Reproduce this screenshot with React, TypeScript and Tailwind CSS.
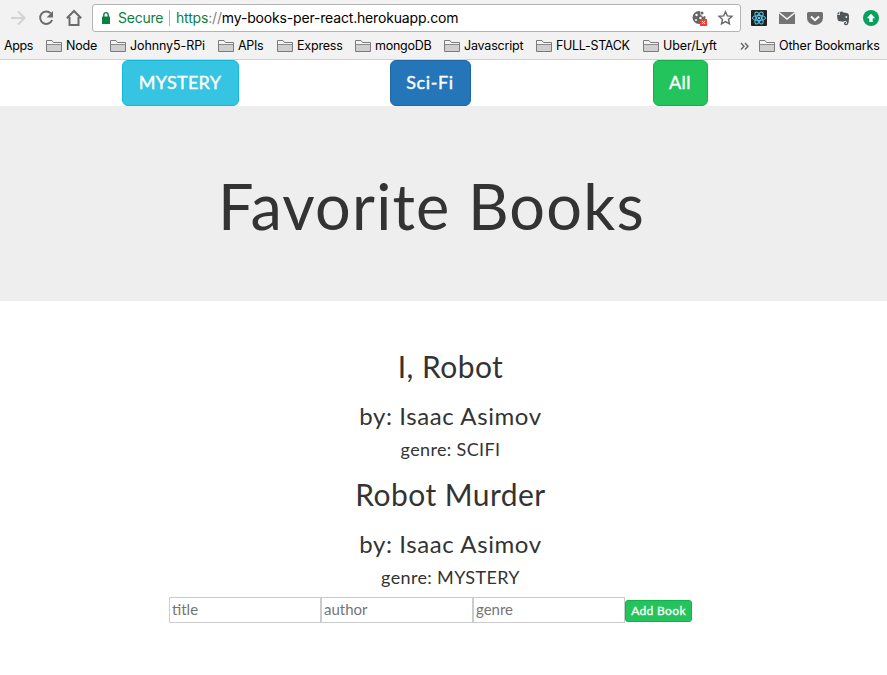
const chrome = "font-['Inter','Liberation_Sans',sans-serif]";
const page = "font-['Lato','Open_Sans',sans-serif]";

function Folder() {
  return (
    <svg width="16" height="14" viewBox="0 0 16 14" className="shrink-0">
      <path d="M.5 12.500v-11h5.500l1.500 2h8v9z" fill="#f4f4f4" stroke="#7b7b7b" />
      <path d="M1 5.500h14v6.500h-14z" fill="#cfcfcf" />
      <path d="M1 5.500h14" stroke="#8a8a8a" />
    </svg>
  );
}

const bookmarks = [
  { label: 'Node', cell: 'w-[64px]', text: 'tracking-[-0.2px]' },
  { label: 'Johnny5-RPi', cell: 'w-[108px]', text: 'tracking-[-0.1px]' },
  { label: 'APIs', cell: 'w-[59px]', text: 'tracking-[-0.3px]' },
  { label: 'Express', cell: 'w-[78px]', text: 'tracking-[-0.2px]' },
  { label: 'mongoDB', cell: 'w-[89px]', text: 'tracking-[-0.25px]' },
  { label: 'Javascript', cell: 'w-[92px]', text: 'tracking-[-0.2px]' },
  { label: 'FULL-STACK', cell: 'w-[107px]', text: 'tracking-[-0.3px]' },
  { label: 'Uber/Lyft', cell: 'w-[97px]', text: 'tracking-[-0.1px]' },
];

function ReactIcon() {
  return (
    <svg width="16" height="16" viewBox="0 0 16 16">
      <rect width="16" height="16" rx="1" fill="#222" />
      <g fill="none" stroke="#53c9ee" strokeWidth="1">
        <ellipse cx="8" cy="8" rx="6.6" ry="2.5" />
        <ellipse cx="8" cy="8" rx="6.6" ry="2.5" transform="rotate(60 8 8)" />
        <ellipse cx="8" cy="8" rx="6.6" ry="2.5" transform="rotate(120 8 8)" />
      </g>
      <circle cx="8" cy="8" r="1.3" fill="#53c9ee" />
    </svg>
  );
}

function Toolbar() {
  return (
    <div className="flex h-9 items-center">
      <svg width="92" height="36" viewBox="0 0 92 36" className="shrink-0" fill="none">
        <path d="M11 18h13M18 11.5l6.5 6.5-6.5 6.5" stroke="#d2d2d2" strokeWidth="2" />
        <path d="M50.8 13.4a6.2 6.2 0 1 0 1.3 6.6" stroke="#6b6b6b" strokeWidth="2" />
        <path d="M53 11v6.4h-6.4z" fill="#6b6b6b" />
        <path d="M66.800 18.200L74 11l7.200 7.200M69.500 17v8h9v-8" stroke="#6b6b6b" strokeWidth="2" />
      </svg>
      <div className="flex h-[28px] w-[649px] shrink-0 items-center rounded-[3px] border border-[#b4b4b4] bg-white text-[14px]">
        <svg width="25" height="26" viewBox="0 0 25 26" className="shrink-0">
          <rect x="9" y="11.500" width="8" height="7.500" rx=".5" fill="#0b8043" />
          <path d="M10.800 12v-2.200a2.200 2.200 0 0 1 4.400 0V12" fill="none" stroke="#0b8043" strokeWidth="1.400" />
        </svg>
        <span className="w-[51px] shrink-0 pb-px tracking-[-0.25px] text-[#0b8043]">Secure</span>
        <span className="h-4 w-px bg-[#b4b4b4]" />
        <span className="ml-[6px] w-[515px] shrink-0 pb-px tracking-[-0.17px] whitespace-nowrap text-black">
          <span className="text-[#0b8043]">https</span><span className="text-[#808080]">://</span>my-books-per-react.herokuapp.com
        </span>
        <svg width="48" height="26" viewBox="0 0 48 26" className="shrink-0">
          <circle cx="8" cy="12.500" r="6.500" fill="#666" />
          <circle cx="5.500" cy="10" r="1.200" fill="#fff" />
          <circle cx="5" cy="15" r="1" fill="#fff" />
          <circle cx="9.500" cy="13" r="1.200" fill="#fff" />
          <path d="M9.500 5l6 5-3.500 2-3-3z" fill="#fff" />
          <circle cx="11" cy="8" r="1.500" fill="#666" />
          <rect x="9" y="14" width="7" height="7" fill="#ea4335" />
          <path d="M11 16l3 3m0-3l-3 3" stroke="#fff" strokeWidth="1" />
          <path d="M34.500 6.700l1.850 4.200 4.600.45-3.450 3.050 1 4.500-4-2.350-4 2.350 1-4.500-3.450-3.050 4.600-.45z" fill="none" stroke="#666" strokeWidth="1.400" />
        </svg>
      </div>
      <div className="ml-[10px] flex items-center gap-3">
        <ReactIcon />
        <svg width="16" height="16" viewBox="0 0 16 16">
          <rect y="2" width="16" height="12" fill="#747474" />
          <path d="M0 2.500l8 6.500 8-6.500" fill="none" stroke="#f2f2f2" strokeWidth="1.600" />
        </svg>
        <svg width="16" height="16" viewBox="0 0 16 16">
          <path d="M1.500 2h13q1.500 0 1.500 1.500V8a8 7 0 0 1-16 0V3.500Q0 2 1.500 2z" fill="#707070" />
          <path d="M4 6.500l4 3.700 4-3.700" fill="none" stroke="#fff" strokeWidth="2" />
        </svg>
        <svg width="16" height="16" viewBox="0 0 16 16">
          <path d="M2 5h3V2q2-1 3.500.5L12 3q1.800.4 2 2.500.3 4-.5 7.500-.6 2.500-3 2.200-2-.3-1.500-2.500.5-1 2-.7v1.200h-.8q0 1 1 .8 1-.5.8-2-1.500-1.500-2.500-1Q8.500 12 7 11.500L3.500 11Q2 9 2 5z" fill="#50565a" />
          <path d="M1.700 4.200L4.300 1.600v2.600z" fill="#50565a" />
          <circle cx="11.300" cy="7" r=".9" fill="#f2f2f2" />
        </svg>
        <svg width="16" height="16" viewBox="0 0 16 16">
          <circle cx="8" cy="8" r="8" fill="#08a05a" />
          <path d="M8 3.700l4.200 4.500H9.700V12H6.300V8.200H3.800z" fill="#fff" />
        </svg>
      </div>
    </div>
  );
}

function BookmarkBar() {
  return (
    <div className="flex h-[23px] items-center pb-[3px] text-[12.5px] whitespace-nowrap text-black">
      <span className="w-[42px] shrink-0 pl-1 tracking-[-0.4px]">Apps</span>
      <span className="w-1 shrink-0" />
      {bookmarks.map((b) => (
        <span key={b.label} className={`flex shrink-0 items-center gap-1 ${b.cell}`}>
          <Folder />
          <span className={b.text}>{b.label}</span>
        </span>
      ))}
      <svg width="19" height="16" viewBox="0 0 19 16" className="shrink-0">
        <path d="M1 5l3 3.200-3 3.200M5 5l3 3.200-3 3.200" fill="none" stroke="#666" strokeWidth="1.400" />
      </svg>
      <span className="flex items-center gap-1">
        <Folder />
        <span className="tracking-[-0.15px]">Other Bookmarks</span>
      </span>
    </div>
  );
}

function Book({ title, author, genre }: { title: string; author: string; genre: string }) {
  return (
    <li className="flex h-[128px] flex-col items-center whitespace-nowrap">
      <h2 className="text-[30px] leading-[33px] tracking-[0.45px]">{title}</h2>
      <h3 className="mt-[18px] text-[24px] leading-[30px] tracking-[0.6px]">by: {author}</h3>
      <p className="mt-[7px] text-[18px] leading-[22px] tracking-[0.35px]">genre: {genre}</p>
    </li>
  );
}

const field =
  'h-[26px] w-[152px] border border-[#ccc] px-[2px] pb-[2px] placeholder:text-[#757575]';

export default function App() {
  return (
    <div className="h-[675px] w-[887px] overflow-hidden bg-white text-[#333]">
      <header className={`h-[60px] border-b border-[#d0d0d0] bg-[#f2f2f2] ${chrome}`}>
        <Toolbar />
        <BookmarkBar />
      </header>
      <main className={page}>
        <nav className="ml-[55px] grid w-[750px] grid-cols-3 justify-items-center text-[18px] text-white [-webkit-text-stroke:0.4px_white]">
          <button className="h-[46px] w-[117px] rounded-[6px] border border-[#13b9dc] bg-[#35c4e2] pb-[2px] tracking-[0.3px]">MYSTERY</button>
          <button className="h-[46px] w-[81px] rounded-[6px] border border-[#2067a8] bg-[#2576b9] pb-[2px] tracking-[0.6px]">Sci-Fi</button>
          <button className="h-[46px] w-[55px] rounded-[6px] border border-[#12b14c] bg-[#24c45d] pb-[2px] tracking-[0.5px]">All</button>
        </nav>
        <section className="h-[195px] bg-[#eee] pt-[65px]">
          <h1 className="w-[863px] text-center text-[63px] leading-[70px] tracking-[1.2px]">Favorite Books</h1>
        </section>
        <ul className="ml-[95px] w-[711px] pt-[49px]">
          <Book title="I, Robot" author="Isaac Asimov" genre="SCIFI" />
          <Book title="Robot Murder" author="Isaac Asimov" genre="MYSTERY" />
        </ul>
        <form className="-mt-[9px] ml-[169px] flex items-center text-[15px]">
          <input placeholder="title" className={field} />
          <input placeholder="author" className={field} />
          <input placeholder="genre" className={field} />
          <button type="button" className="mt-[1px] h-[22px] w-[67px] rounded-[3px] border border-[#12b14c] bg-[#24c45d] text-[12px] leading-none tracking-[0.35px] whitespace-nowrap text-white [-webkit-text-stroke:0.3px_white]">Add Book</button>
        </form>
      </main>
    </div>
  );
}
